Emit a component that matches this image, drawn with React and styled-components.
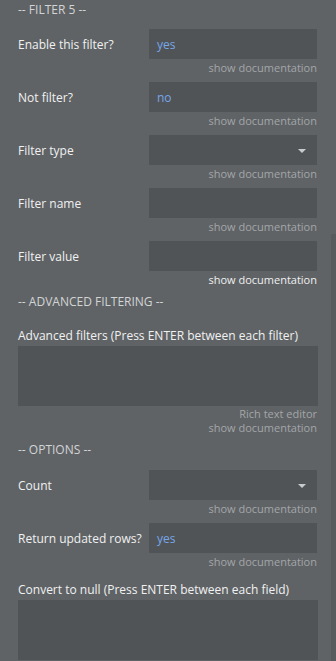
import React from "react";
import styled, { createGlobalStyle } from "styled-components";

const Global = createGlobalStyle`
  html, body { margin: 0; padding: 0; background: #5f6366; }
  body { font-family: "Open Sans", "Noto Sans", sans-serif; overflow: hidden; }
`;

const Panel = styled.div`
  position: relative;
  width: 336px;
  height: 661px;
  background: #5f6366;
  padding: 0 18px;
  box-sizing: border-box;
  overflow: hidden;
  display: flex;
  flex-direction: column;
`;

const ScrollThumb = styled.div`
  position: absolute;
  right: 0;
  top: 234px;
  width: 5px;
  bottom: 0;
  background: #575b5e;
`;

const SectionHeader = styled.div`
  flex: none;
  color: #d3d4d5;
  font-size: 12px;
  line-height: 20px;
  height: 20px;
  margin-top: ${(p) => p.$top || 0}px;
  margin-bottom: ${(p) => p.$bottom || 0}px;
`;

const Field = styled.div`
  flex: none;
  display: flex;
  flex-direction: column;
  margin-bottom: ${(p) => (p.$mb != null ? p.$mb : 7)}px;
`;

const Row = styled.div`
  display: flex;
  align-items: center;
  height: 30px;
`;

const Label = styled.div`
  width: 131px;
  flex: none;
  color: #f1f1f1;
  font-size: 12px;
  white-space: nowrap;
`;

const Input = styled.div`
  width: 168px;
  height: 30px;
  box-sizing: border-box;
  background: #515457;
  color: #76a6e8;
  font-size: 12px;
  padding-left: 8px;
  display: flex;
  align-items: center;
  position: relative;
`;

const Arrow = styled.span`
  position: absolute;
  right: 11px;
  top: 14px;
  width: 0;
  height: 0;
  border-left: 4px solid transparent;
  border-right: 4px solid transparent;
  border-top: 4px solid #c9cacb;
`;

const Doc = styled.div`
  flex: none;
  width: 299px;
  text-align: right;
  font-size: 11px;
  line-height: 14px;
  color: ${(p) => (p.$active ? "#f0f0f0" : "#a3a6a8")};
  margin-top: ${(p) => (p.$top != null ? p.$top : 2)}px;
`;

const BlockLabel = styled.div`
  flex: none;
  color: #f1f1f1;
  font-size: 12px;
  line-height: 16px;
  margin-top: ${(p) => p.$top || 0}px;
  margin-bottom: 2px;
  white-space: nowrap;
`;

const TextArea = styled.div`
  flex: none;
  width: 300px;
  height: 60px;
  background: #515457;
`;

const fields1 = [
  { label: "Enable this filter?", value: "yes" },
  { label: "Not filter?", value: "no" },
  { label: "Filter type", select: true },
  { label: "Filter name" },
  { label: "Filter value", active: true, mb: 5 },
];

function InlineField({ label, value, select, active, mb }) {
  return (
    <Field $mb={mb}>
      <Row>
        <Label>{label}</Label>
        <Input>
          {value}
          {select && <Arrow />}
        </Input>
      </Row>
      <Doc $active={active}>show documentation</Doc>
    </Field>
  );
}

export default function App() {
  return (
    <>
      <Global />
      <Panel>
        <SectionHeader $bottom={9}>-- FILTER 5 --</SectionHeader>
        {fields1.map((f) => (
          <InlineField key={f.label} {...f} />
        ))}
        <SectionHeader $bottom={16}>-- ADVANCED FILTERING --</SectionHeader>
        <BlockLabel>Advanced filters (Press ENTER between each filter)</BlockLabel>
        <TextArea />
        <Doc $top={1}>Rich text editor</Doc>
        <Doc $top={0}>show documentation</Doc>
        <SectionHeader $top={5} $bottom={10}>-- OPTIONS --</SectionHeader>
        <InlineField label="Count" select />
        <InlineField label="Return updated rows?" value="yes" />
        <BlockLabel $top={6}>Convert to null (Press ENTER between each field)</BlockLabel>
        <TextArea />
        <ScrollThumb />
      </Panel>
    </>
  );
}
